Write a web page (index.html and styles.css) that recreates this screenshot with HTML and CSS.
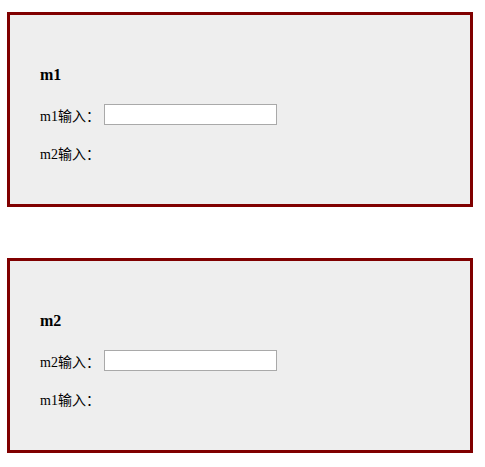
FILE: index.html
```html
<!DOCTYPE html>
<html lang="zh">
<head>
<meta charset="utf-8">
<title>m1 m2</title>
<link rel="stylesheet" href="styles.css">
</head>
<body>
  <div class="page">
    <section class="box">
      <h3 class="title">m1</h3>
      <div class="row">
        <span class="label">m1输入：</span>
        <input class="field" type="text">
      </div>
      <div class="row">
        <span class="label">m2输入：</span>
      </div>
    </section>
    <section class="box">
      <h3 class="title">m2</h3>
      <div class="row">
        <span class="label">m2输入：</span>
        <input class="field" type="text">
      </div>
      <div class="row">
        <span class="label">m1输入：</span>
      </div>
    </section>
  </div>
</body>
</html>
```

FILE: styles.css
```css
* { box-sizing: border-box; }
html, body { margin: 0; background: #fff; }
.page {
  padding: 12px 0 0 7px;
  display: flex;
  flex-direction: column;
  gap: 51px;
  font-family: "Liberation Serif", "Noto Sans CJK SC", serif;
  color: #000;
}
.box {
  width: 466px;
  border: 3px solid #800000;
  background: #eeeeee;
  padding: 50px 30px 41px;
  display: flex;
  flex-direction: column;
}
.title {
  margin: 0;
  font-size: 16px;
  font-weight: bold;
  line-height: 20px;
  height: 20px;
}
.row {
  display: flex;
  align-items: center;
  height: 21px;
  font-size: 14px;
}
.title + .row { margin-top: 19px; }
.row + .row { margin-top: 17px; }
.label {
  display: inline-block;
  width: 64px;
  font-family: "Liberation Serif", "Noto Sans CJK SC", serif;
  white-space: nowrap;
}
.field {
  width: 173px;
  height: 21px;
  border: 1px solid #a9a9a9;
  background: #fff;
  padding: 0 2px;
  margin: 0;
  outline: none;
}
```
